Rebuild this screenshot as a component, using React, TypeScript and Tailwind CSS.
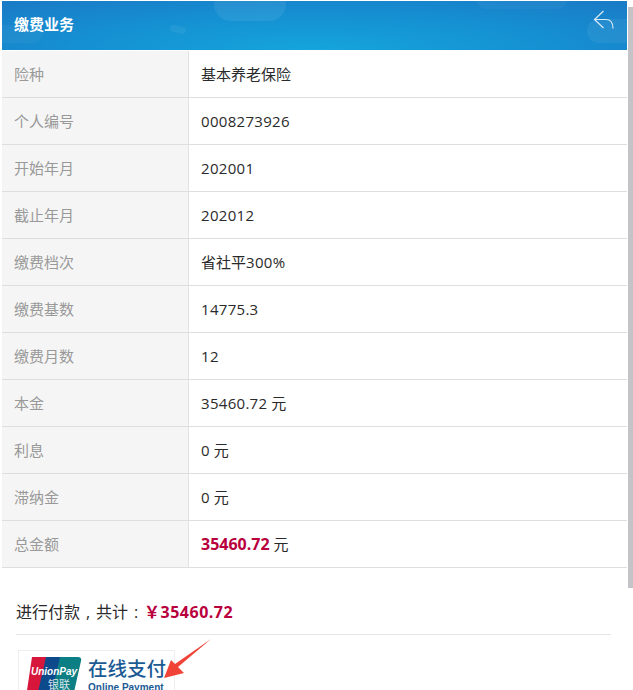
import React from "react";

const Num = ({ children }: { children: React.ReactNode }) => (
  <span className="tracking-[0.3px]">{children}</span>
);

const rows: [string, React.ReactNode][] = [
  ["险种", "基本养老保险"],
  ["个人编号", <Num>0008273926</Num>],
  ["开始年月", <Num>202001</Num>],
  ["截止年月", <Num>202012</Num>],
  ["缴费档次", <>省社平<Num>300%</Num></>],
  ["缴费基数", <Num>14775.3</Num>],
  ["缴费月数", <Num>12</Num>],
  ["本金", <><Num>35460.72</Num> 元</>],
  ["利息", <><Num>0</Num> 元</>],
  ["滞纳金", <><Num>0</Num> 元</>],
  ["总金额", <><b className="text-[16px] text-[#b8003c]">35460.72</b> 元</>],
];

const font = "font-['Open_Sans','Noto_Sans_CJK_SC',sans-serif]";

export default function App() {
  return (
    <div className={`relative flex h-[690px] w-[633px] overflow-hidden bg-white ${font}`}>
      <div className="w-[627px] shrink-0 pl-[2px] pt-[1px]">
        <header className="relative flex h-[49px] items-center justify-between overflow-hidden bg-[radial-gradient(ellipse_70%_130%_at_50%_100%,#15a5db_0%,#1590d2_55%,#1a7cc6_100%)] pb-[3px] pl-[12px] pr-[12px]">
          <span className="absolute -top-[14px] left-[212px] h-[34px] w-[72px] rounded-full bg-white/[0.07]" />
          <span className="absolute -left-[30px] top-[24px] h-[18px] w-[70px] rounded-full bg-white/[0.04]" />
          <span className="absolute left-[168px] top-[25px] h-[7px] w-[16px] rotate-12 rounded-full bg-white/[0.06]" />
          <span className="absolute right-[-20px] top-[18px] h-[24px] w-[60px] rounded-full bg-white/[0.06]" />
          <span className="absolute right-[60px] -top-[10px] h-[18px] w-[90px] rounded-full bg-white/[0.04]" />
          <span className="relative text-[15px] font-bold text-white">缴费业务</span>
          <svg className="relative mb-[7px]" width="22" height="21" viewBox="0 0 22 21" fill="none" stroke="#dbeaf6" strokeWidth="1.2">
            <path d="M10.5 1 1.5 9.5 10.5 18" />
            <path d="M1.5 9.5H13c4.5 0 7 3 7 9" />
          </svg>
        </header>
        <div className="mt-[1px] text-[15px] text-[#2a2a2a]">
          {rows.map(([k, v]) => (
            <div key={k} className="flex h-[47px] border-b border-[#dedede]">
              <div className="flex w-[187px] items-center border-r border-[#e2e2e2] bg-[#f5f5f5] pl-[12px] text-[#999]">{k}</div>
              <div className="flex flex-1 items-center whitespace-pre pl-[12px]"><span>{v}</span></div>
            </div>
          ))}
        </div>
        <div className="ml-[14px] flex h-[67px] w-[595px] items-end border-b border-[#e5e5e5] pb-[10px] text-[16px] leading-[24px] text-[#2a2a2a]">
          <span>进行付款</span>
          <span className="w-[16px] text-center">,</span>
          <span>共计</span>
          <span className="w-[16px] text-center">:</span>
          <b className="tracking-[0.5px] text-[#b8003c]">￥35460.72</b>
        </div>
        <div className="ml-[16px] mt-[15px] flex h-[60px] w-[157px] items-start gap-[6px] border border-[#eee] pl-[7px] pt-[5px]">
          <svg width="56" height="46" viewBox="0 0 56 46" className="shrink-0">
            <path d="M6 1h18L14 45H2Q-1 45 0 41Z" fill="#d6163b" />
            <path d="M20 1h18L28 45H10Z" fill="#0c4a8c" />
            <path d="M34 1h18q4 0 3 4L46 45H24Z" fill="#0b7f84" />
            <text x="28" y="19" textAnchor="middle" fill="#fff" fontSize="10" fontWeight="700" fontStyle="italic" fontFamily="Liberation Sans">UnionPay</text>
            <text x="33" y="33" textAnchor="middle" fill="#d7e3ea" fontSize="11" fontFamily="Noto Sans CJK SC">银联</text>
          </svg>
          <div className="pt-[1px] text-[#1c5a94]">
            <div className="whitespace-nowrap text-[19.5px] font-medium leading-[24px]">在线支付</div>
            <div className="whitespace-nowrap font-['Liberation_Sans'] text-[10px] font-bold leading-[14px]">Online Payment</div>
          </div>
        </div>
      </div>
      {/* scrollbar */}
      <div className="ml-[1px] mt-[7px] h-[581px] w-[5px] bg-[#c4c4c8]" />
      {/* annotation arrow */}
      <svg className="absolute left-[160px] top-[636px]" width="54" height="44" viewBox="0 0 54 44">
        <path d="M51 3 18 31 24 37 4 42 11 24 15 28Z" fill="#f04438" />
      </svg>
    </div>
  );
}
